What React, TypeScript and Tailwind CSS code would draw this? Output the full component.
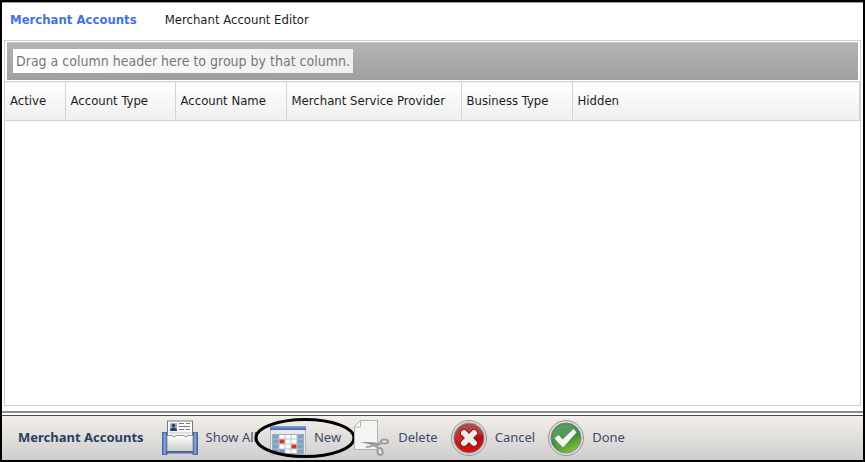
import { useState, type ReactNode } from "react";

const tabs = ["Merchant Accounts", "Merchant Account Editor"];

const columns = [
  { label: "Active", width: "w-[60px]" },
  { label: "Account Type", width: "w-[110px]" },
  { label: "Account Name", width: "w-[111px]" },
  { label: "Merchant Service Provider", width: "w-[175px]" },
  { label: "Business Type", width: "w-[111px]" },
  { label: "Hidden", width: "" },
];

function CardFileIcon() {
  return (
    <svg width="36" height="36" viewBox="0 0 36 36" aria-hidden="true">
      <defs>
        <linearGradient id="post" x1="0" x2="1">
          <stop offset="0" stopColor="#3a5aa8" />
          <stop offset="0.5" stopColor="#8fb0e6" />
          <stop offset="1" stopColor="#34508f" />
        </linearGradient>
        <linearGradient id="sheet" x1="0" y1="0" x2="0" y2="1">
          <stop offset="0" stopColor="#ffffff" />
          <stop offset="1" stopColor="#c9cbcd" />
        </linearGradient>
      </defs>
      <rect x="1" y="28" width="34" height="5.5" fill="#4a6cb5" />
      <rect x="0.5" y="12.5" width="4.5" height="22" fill="url(#post)" stroke="#3d5ba0" strokeWidth="0.8" />
      <rect x="31" y="12.5" width="4.5" height="22" fill="url(#post)" stroke="#3d5ba0" strokeWidth="0.8" />
      <rect x="5.5" y="1" width="25" height="16" fill="#fbfbfb" stroke="#777" />
      <rect x="8" y="3" width="7" height="8" fill="#8db4e4" />
      <circle cx="11.5" cy="5.5" r="1.7" fill="#4a3526" />
      <path d="M8 11Q8 7.5 11.5 7.5Q15 7.5 15 11Z" fill="#243f73" />
      <path d="M17 3.5H22M24 3.5H28M17 6.5H28M17 9.5H22M24 9.5H28" stroke="#777" />
      <path d="M7 13H29" stroke="#c2c2c2" />
      <path d="M5 15.5H10Q12 18.5 14 15.5H22Q24 18.5 26 15.5H31V31.5H5Z" fill="url(#sheet)" stroke="#909396" />
      <path d="M5 31.5H31" stroke="#606469" />
    </svg>
  );
}

function CalendarIcon() {
  return (
    <svg width="36" height="36" viewBox="0 0 36 36" aria-hidden="true">
      <defs>
        <linearGradient id="calTop" x1="0" y1="0" x2="0" y2="1">
          <stop offset="0" stopColor="#8da6d8" />
          <stop offset="1" stopColor="#4663a6" />
        </linearGradient>
      </defs>
      <rect x="0.5" y="6.5" width="35" height="28" fill="#e8e9eb" stroke="#b4b6ba" />
      <rect x="0" y="6" width="36" height="4" fill="url(#calTop)" />
      <rect x="2.5" y="14.5" width="31" height="19" fill="#fff" stroke="#a9adb3" />
      <path d="M3 15H9V33H3ZM27 15H33V33H27Z" fill="#79a3cc" />
      <path d="M3 29H15V33H3Z" fill="#6f95bd" />
      <path d="M9 15V33M15 15V33M21 15V33M27 15V33M3 19H33M3 24H33M3 29H33" stroke="#b9c1ca" />
      <rect x="9.5" y="19.5" width="5" height="4" fill="#d83a10" />
      <rect x="21.5" y="24.5" width="5" height="4" fill="#d83a10" />
    </svg>
  );
}

function CutPageIcon() {
  return (
    <svg width="36" height="36" viewBox="0 0 36 36" aria-hidden="true">
      <path d="M6.5 0.5H23.5V29.5H0.5V7Z" fill="#f4f4f4" stroke="#b4b4b4" />
      <path d="M6.5 0.5V7H0.5Z" fill="#fff" stroke="#b4b4b4" />
      <path d="M6 22.5Q17 21 28 24L22 26.5Q14 23 6 22.5Z" fill="#8c8c8c" />
      <path d="M12 27Q20 27 28 21.5M19 24L25 29" fill="none" stroke="#a0a0a0" strokeWidth="2" />
      <ellipse cx="30.5" cy="21.5" rx="3.5" ry="2" fill="#eee" stroke="#9b9b9b" strokeWidth="2" />
      <ellipse cx="26" cy="31.5" rx="2.5" ry="3.5" fill="#e4e4e4" stroke="#9b9b9b" strokeWidth="2" transform="rotate(-15 26 31.5)" />
    </svg>
  );
}

function CancelIcon() {
  return (
    <svg width="36" height="36" viewBox="0 0 36 36" aria-hidden="true">
      <defs>
        <linearGradient id="redFill" x1="0" y1="0" x2="0" y2="1">
          <stop offset="0" stopColor="#a43434" />
          <stop offset="0.5" stopColor="#b80d10" />
          <stop offset="1" stopColor="#e01212" />
        </linearGradient>
      </defs>
      <circle cx="18" cy="18" r="17.5" fill="#d9d9d9" stroke="#989898" />
      <circle cx="18" cy="18" r="15" fill="url(#redFill)" stroke="#858080" />
      <path d="M4 18A14 14 0 0 1 32 14Q20 15 13 24Q8 25 4 18Z" fill="#fff" opacity="0.13" />
      <path d="M13 13L23 23M23 13L13 23" stroke="#7c1010" strokeWidth="7.5" strokeLinecap="round" />
      <path d="M13 13L23 23M23 13L13 23" stroke="#ededed" strokeWidth="6" strokeLinecap="round" />
    </svg>
  );
}

function DoneIcon() {
  return (
    <svg width="36" height="36" viewBox="0 0 36 36" aria-hidden="true">
      <defs>
        <linearGradient id="greenFill" x1="0.2" y1="0" x2="0.7" y2="1">
          <stop offset="0" stopColor="#4c8c50" />
          <stop offset="0.5" stopColor="#2f8436" />
          <stop offset="1" stopColor="#8bc83c" />
        </linearGradient>
      </defs>
      <circle cx="18" cy="18" r="17.5" fill="#d9d9d9" stroke="#989898" />
      <circle cx="18" cy="18" r="15" fill="url(#greenFill)" stroke="#7d867d" />
      <path d="M4 18A14 14 0 0 1 30 11Q16 17 10 27Q5 24 4 18Z" fill="#fff" opacity="0.15" />
      <path d="M7 18.5L10.5 15.5L14.5 20L25.5 9.5L28 12.5L15 27Z" fill="#f4f4f4" stroke="#f4f4f4" strokeLinejoin="round" />
    </svg>
  );
}

function ToolButton({ icon, label, children }: { icon: ReactNode; label: string; children?: ReactNode }) {
  return (
    <button type="button" className="relative flex items-center gap-2 whitespace-nowrap">
      <span className="shrink-0">{icon}</span>
      {label}
      {children}
    </button>
  );
}

export default function App() {
  const [active, setActive] = useState(0);

  return (
    <div className="h-screen flex flex-col border-2 border-black bg-white font-['DejaVu_Sans_Condensed','DejaVu_Sans',sans-serif] text-[13px] text-[#1c1c1c]">
      <nav className="flex h-[38px] shrink-0 items-center gap-7 border-t border-[#a0a0a0] px-2 pb-1" role="tablist">
        {tabs.map((tab, i) => (
          <button
            key={tab}
            role="tab"
            aria-selected={active === i}
            onClick={() => setActive(i)}
            className={active === i ? "font-bold text-[#4472e0]" : "text-[#1c1c1c]"}
          >
            {tab}
          </button>
        ))}
      </nav>

      <main className="mx-[2px] mb-[5px] flex-1 border border-[#c3d0e0]">
        <div className="mx-0.5 my-px flex h-[38px] items-center border-t border-[#c4c4c4] bg-linear-to-b from-[#b3b3b3] to-[#9f9f9f] px-1.5 pb-0.5">
          <span className="bg-linear-to-r from-white to-[#efefef] px-[3px] text-sm leading-6 text-[#777]">
            Drag a column header here to group by that column.
          </span>
        </div>
        <table className="w-full table-fixed border-collapse">
          <thead>
            <tr className="h-[39px] border-y border-[#d4d4d4] bg-linear-to-b from-white to-[#efefef]">
              {columns.map((col) => (
                <th
                  key={col.label}
                  scope="col"
                  className={`${col.width} border-r border-[#d4d4d4] px-[5px] text-left font-normal whitespace-nowrap`}
                >
                  {col.label}
                </th>
              ))}
            </tr>
          </thead>
          <tbody />
        </table>
      </main>

      <footer className="border-t-2 border-[#8c8c8c] pt-[2px]">
        <div className="flex h-[45px] items-center gap-[13px] border-t border-[#4a4a4a] bg-linear-to-b from-[#f2efe9] to-[#cfcecf] px-4 font-['Noto_Sans',sans-serif] text-[13px] text-[#3a4a6b]">
          <strong className="mr-[5px] font-bold whitespace-nowrap text-[#2a405f]">Merchant Accounts</strong>
          <ToolButton icon={<CardFileIcon />} label="Show All" />
          <ToolButton icon={<CalendarIcon />} label="New">
            <svg className="absolute -top-0.5 -left-4 h-10 w-[102px]" viewBox="0 0 102 40" fill="none" aria-hidden="true">
              <ellipse cx="51" cy="20" rx="49" ry="18.5" stroke="#000" strokeWidth="3" />
            </svg>
          </ToolButton>
          <ToolButton icon={<CutPageIcon />} label="Delete" />
          <ToolButton icon={<CancelIcon />} label="Cancel" />
          <ToolButton icon={<DoneIcon />} label="Done" />
        </div>
      </footer>
    </div>
  );
}
